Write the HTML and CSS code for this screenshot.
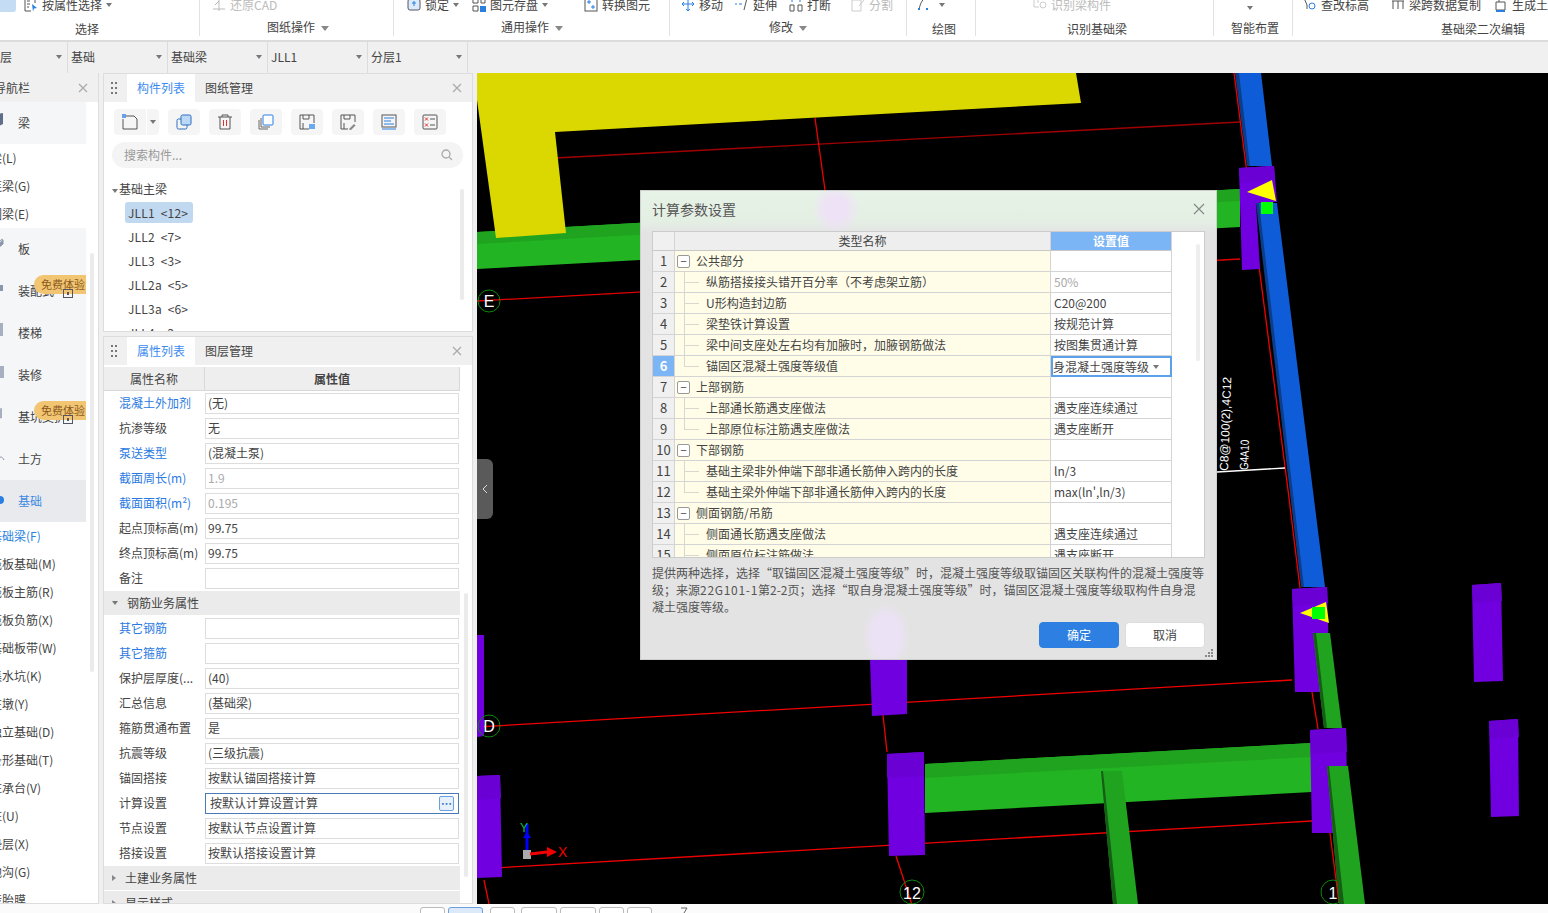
FILE: index.html
```html
<!DOCTYPE html>
<html lang="zh-CN">
<head>
<meta charset="utf-8">
<title>计算参数设置</title>
<link rel="stylesheet" href="styles.css">
</head>
<body>
<div class="app">
  <header class="ribbon">
    <section class="grp g1">
      <div class="tools"><span class="hot"></span><span class="tool"><svg class="ic" viewBox="0 0 14 14"><path d="M1 0v13h6M11 0v5M3 3h3M3 6h3M3 9h2" fill="none" stroke="#555"/><path d="M8 6l5 4-3 .5-1 3z" fill="#2a7fe0"/></svg>按属性选择<i class="dn"></i></span></div>
      <div class="lbl">选择</div>
    </section>
    <section class="grp g2">
      <div class="tools"><span class="tool off"><svg class="ic" viewBox="0 0 14 14"><path d="M1 11h12M7 0v13M3 7l4-4" fill="none" stroke="#bbb"/></svg>还原CAD</span></div>
      <div class="lbl up">图纸操作<i class="dn big"></i></div>
    </section>
    <section class="grp g3">
      <div class="tools"><span class="tool"><svg class="ic" viewBox="0 0 14 14"><rect x="1" y="1" width="12" height="11" rx="2" fill="#dcebfb" stroke="#556"/><path d="M7 3v5M5 5h4" stroke="#2a7fe0"/></svg>锁定<i class="dn"></i></span><span class="tool"><svg class="ic" viewBox="0 0 14 14"><path d="M1 0h5v5H1zM1 8h5v5H1zM9 0h4v5H9z" fill="none" stroke="#555"/><rect x="8" y="8" width="6" height="6" fill="#2a7fe0"/></svg>图元存盘<i class="dn"></i></span><span class="tool"><svg class="ic" viewBox="0 0 14 14"><rect x="1" y="0" width="12" height="13" fill="none" stroke="#555"/><path d="M4 3h2v2H4zM8 8h2v2H8z" fill="none" stroke="#2a7fe0"/></svg>转换图元</span></div>
      <div class="lbl up">通用操作<i class="dn big"></i></div>
    </section>
    <section class="grp g4">
      <div class="tools"><span class="tool"><svg class="ic" viewBox="0 0 14 14"><path d="M7 0v13M1 6h12M5 2l2-2 2 2M5 11l2 2 2-2M3 4L1 6l2 2M11 4l2 2-2 2" fill="none" stroke="#2a7fe0"/></svg>移动</span><span class="tool"><svg class="ic" viewBox="0 0 14 14"><path d="M0 6h2M4 6h3" stroke="#2a7fe0"/><path d="M9 12l3-12" stroke="#555"/></svg>延伸</span><span class="tool"><svg class="ic" viewBox="0 0 14 14"><path d="M1 7h4v6H1zM9 7h4v6H9z" fill="none" stroke="#555"/><path d="M3 0v4M11 0v4" stroke="#2a7fe0"/></svg>打断</span><span class="tool off"><svg class="ic" viewBox="0 0 14 14"><path d="M1 2h9v11H1zM8 8l5-6" fill="none" stroke="#ccc"/></svg>分割</span></div>
      <div class="lbl up">修改<i class="dn big"></i></div>
    </section>
    <section class="grp g5">
      <div class="tools"><span class="tool"><svg class="ic" viewBox="0 0 14 14"><path d="M2 12C3 6 5 2 8 0" fill="none" stroke="#555"/><rect x="1" y="10" width="2" height="2" fill="#2a7fe0"/><rect x="9" y="10" width="2" height="2" fill="#2a7fe0"/></svg><i class="dn"></i></span></div>
      <div class="lbl">绘图</div>
    </section>
    <section class="grp g6">
      <div class="tools"><span class="tool off"><svg class="ic" viewBox="0 0 14 14"><path d="M1 0v9h5M5 0v5" fill="none" stroke="#ccc"/><circle cx="10" cy="7" r="3" fill="none" stroke="#ccc"/></svg>识别梁构件</span></div>
      <div class="lbl">识别基础梁</div>
    </section>
    <section class="grp g7">
      <div class="tools"><span class="tool"><i class="dn"></i></span></div>
      <div class="lbl">智能布置</div>
    </section>
    <section class="grp g8">
      <div class="tools"><span class="tool"><svg class="ic" viewBox="0 0 14 14"><path d="M1 0l3 7v4" fill="none" stroke="#555"/><circle cx="9" cy="8" r="3" fill="none" stroke="#2a7fe0"/></svg>查改标高</span><span class="tool"><svg class="ic" viewBox="0 0 14 14"><path d="M1 3h12M2 3v8M7 3v8M12 3v8" fill="none" stroke="#555"/></svg>梁跨数据复制</span><span class="tool"><svg class="ic" viewBox="0 0 14 14"><path d="M2 4h9v8H2zM5 4V0" fill="none" stroke="#555"/><path d="M2 13h9" stroke="#2a7fe0" stroke-width="2"/></svg>生成土</span></div>
      <div class="lbl">基础梁二次编辑</div>
    </section>
  </header>

  <nav class="selbar">
    <div class="sel first">层<i class="dn"></i></div>
    <div class="sel">基础<i class="dn"></i></div>
    <div class="sel">基础梁<i class="dn"></i></div>
    <div class="sel">JLL1<i class="dn"></i></div>
    <div class="sel">分层1<i class="dn"></i></div>
  </nav>

  <main class="main">
    <aside class="nav">
      <div class="nav-head"><span class="nav-title">模块导航栏</span><svg class="x" viewBox="0 0 10 10"><path d="M1 1l8 8M9 1L1 9"/></svg></div>
      <div class="nav-body">
        <div class="cat"><svg class="cat-ic" viewBox="0 0 14 16"><path d="M1 3l12-2v11l-6 3z" fill="#5f6f8a"/></svg>梁</div>
        <div class="sub">梁(L)</div>
        <div class="sub">连梁(G)</div>
        <div class="sub">圈梁(E)</div>
        <div class="cat"><svg class="cat-ic" viewBox="0 0 14 16"><path d="M2 12L13 2v4L2 15zM2 7l11-6" fill="#8b97ab" stroke="#8b97ab"/></svg>板</div>
        <div class="cat"><svg class="cat-ic" viewBox="0 0 14 16"><path d="M1 5h12v6H1z" fill="#8b97ab"/></svg>装配式<span class="badge">免费体验</span><svg class="lock" viewBox="0 0 10 10"><rect x=".5" y="1.5" width="9" height="8" fill="none" stroke="#556"/><rect x="4" y="4" width="2" height="3" fill="#556"/></svg></div>
        <div class="cat"><svg class="cat-ic" viewBox="0 0 14 16"><path d="M1 14V9h4V5h4V1h4v13z" fill="#a7b0c0"/></svg>楼梯</div>
        <div class="cat"><svg class="cat-ic" viewBox="0 0 14 16"><path d="M6 2h8v12H6z" fill="#a7b0c0"/></svg>装修</div>
        <div class="cat"><svg class="cat-ic" viewBox="0 0 14 16"><path d="M2 5l10-3v10L2 15z" fill="#a7b0c0"/></svg>基坑支护<span class="badge">免费体验</span><svg class="lock" viewBox="0 0 10 10"><rect x=".5" y="1.5" width="9" height="8" fill="none" stroke="#556"/><rect x="4" y="4" width="2" height="3" fill="#556"/></svg></div>
        <div class="cat"><svg class="cat-ic" viewBox="0 0 14 16"><path d="M8 12c2-4 4-4 6 0" fill="none" stroke="#8b97ab"/></svg>土方</div>
        <div class="cat on"><svg class="cat-ic" viewBox="0 0 14 16"><circle cx="10" cy="10" r="4" fill="#2a7fe0"/></svg>基础</div>
        <div class="sub act">基础梁(F)</div>
        <div class="sub">筏板基础(M)</div>
        <div class="sub">筏板主筋(R)</div>
        <div class="sub">筏板负筋(X)</div>
        <div class="sub">基础板带(W)</div>
        <div class="sub">集水坑(K)</div>
        <div class="sub">柱墩(Y)</div>
        <div class="sub">独立基础(D)</div>
        <div class="sub">条形基础(T)</div>
        <div class="sub">桩承台(V)</div>
        <div class="sub">桩(U)</div>
        <div class="sub">垫层(X)</div>
        <div class="sub">地沟(G)</div>
        <div class="sub">砖胎膜</div>
      </div>
      <span class="sb sb-nav"></span>
    </aside>

    <div class="col">
      <section class="panel p1">
        <div class="p-head">
          <span class="grip"></span>
          <span class="tab on">构件列表</span>
          <span class="tab">图纸管理</span>
          <svg class="x" viewBox="0 0 10 10"><path d="M1 1l8 8M9 1L1 9"/></svg>
        </div>
        <div class="iconbar">
          <span class="btn split"><svg viewBox="0 0 16 16"><path d="M4 2h8l3 3v10H1V5" fill="none" stroke="#555"/><path d="M0 0h4v4H0z" fill="#6aa0e8"/></svg></span><span class="btn arrow"><i class="dn"></i></span>
          <span class="btn"><svg viewBox="0 0 16 16"><rect x="1" y="5" width="10" height="10" rx="1.5" fill="none" stroke="#2a6fc0"/><rect x="5" y="1" width="10" height="10" rx="1.5" fill="#bcd8f7" stroke="#2a6fc0"/></svg></span>
          <span class="btn"><svg viewBox="0 0 16 16"><path d="M1 3h14M5 3V1h6v2M3 3v12h10V3" fill="none" stroke="#555"/><path d="M6.500 6v6M9.500 6v6" stroke="#e03030"/></svg></span>
          <span class="btn"><svg viewBox="0 0 16 16"><path d="M1 6v9h9M3 4v9h9" fill="none" stroke="#666"/><rect x="5" y="1" width="10" height="10" rx="1" fill="#fff" stroke="#2a7fe0"/></svg></span>
          <span class="btn"><svg viewBox="0 0 16 16"><path d="M10 15H1V1h14v8M4 1v4h6V1M4 15V9" fill="none" stroke="#555"/><rect x="10" y="10" width="6" height="5" fill="#6aa9ee"/></svg></span>
          <span class="btn"><svg viewBox="0 0 16 16"><path d="M8 15H1V1h14v7M4 1v4h6V1M4 15V9" fill="none" stroke="#555"/><path d="M9 15l5-5 1.500 1.500-5 5z" fill="#888"/></svg></span>
          <span class="btn"><svg viewBox="0 0 16 16"><rect x="1" y="1" width="14" height="12" fill="none" stroke="#555"/><path d="M3 4h10M3 7h7M3 10h10M1 15h14" stroke="#2a7fe0"/></svg></span>
          <span class="btn"><svg viewBox="0 0 16 16"><rect x="1" y="1" width="14" height="14" rx="1" fill="none" stroke="#555"/><path d="M3 3.500l3 3M6 3.500l-3 3M3 9.500l3 3M6 9.500l-3 3" stroke="#e03030"/><path d="M8 5h5M8 11h5" stroke="#555"/></svg></span>
        </div>
        <div class="search"><span>搜索构件...</span><svg viewBox="0 0 12 12"><circle cx="5" cy="5" r="4" fill="none" stroke="#aaa" stroke-width="1.300"/><path d="M8 8l3 3" stroke="#aaa" stroke-width="1.300"/></svg></div>
        <div class="tree">
          <div class="t-root"><i class="dn"></i>基础主梁</div>
          <div class="t-item"><span class="pill">JLL1  &lt;12&gt;</span></div>
          <div class="t-item"><span>JLL2  &lt;7&gt;</span></div>
          <div class="t-item"><span>JLL3  &lt;3&gt;</span></div>
          <div class="t-item"><span>JLL2a  &lt;5&gt;</span></div>
          <div class="t-item"><span>JLL3a  &lt;6&gt;</span></div>
          <div class="t-item"><span>JLL4  &lt;2&gt;</span></div>
        </div>
        <span class="sb sb-p1"></span>
      </section>

      <section class="panel p2">
        <div class="p-head">
          <span class="grip"></span>
          <span class="tab on">属性列表</span>
          <span class="tab">图层管理</span>
          <svg class="x" viewBox="0 0 10 10"><path d="M1 1l8 8M9 1L1 9"/></svg>
        </div>
        <div class="props">
          <div class="ph"><span>属性名称</span><b>属性值</b></div>
          <div class="pr"><label class="lk">混凝土外加剂</label><span class="v">(无)</span></div>
          <div class="pr"><label>抗渗等级</label><span class="v">无</span></div>
          <div class="pr"><label class="lk">泵送类型</label><span class="v">(混凝土泵)</span></div>
          <div class="pr"><label class="lk">截面周长(m)</label><span class="v dim">1.9</span></div>
          <div class="pr"><label class="lk">截面面积(m²)</label><span class="v dim">0.195</span></div>
          <div class="pr"><label>起点顶标高(m)</label><span class="v">99.75</span></div>
          <div class="pr"><label>终点顶标高(m)</label><span class="v">99.75</span></div>
          <div class="pr"><label>备注</label><span class="v"></span></div>
          <div class="ps"><i class="dn"></i>钢筋业务属性</div>
          <div class="pr"><label class="lk">其它钢筋</label><span class="v"></span></div>
          <div class="pr"><label class="lk">其它箍筋</label><span class="v"></span></div>
          <div class="pr"><label>保护层厚度(...</label><span class="v">(40)</span></div>
          <div class="pr"><label>汇总信息</label><span class="v">(基础梁)</span></div>
          <div class="pr"><label>箍筋贯通布置</label><span class="v">是</span></div>
          <div class="pr"><label>抗震等级</label><span class="v">(三级抗震)</span></div>
          <div class="pr"><label>锚固搭接</label><span class="v">按默认锚固搭接计算</span></div>
          <div class="pr"><label>计算设置</label><span class="v focus"><em>按默认计算设置计算</em><u class="more">…</u></span></div>
          <div class="pr"><label>节点设置</label><span class="v">按默认节点设置计算</span></div>
          <div class="pr"><label>搭接设置</label><span class="v">按默认搭接设置计算</span></div>
          <div class="ps"><i class="rt"></i>土建业务属性</div>
          <div class="ps"><i class="rt"></i>显示样式</div>
        </div>
        <span class="sb sb-p2"></span>
      </section>
    </div>

    <div class="canvas">
      <svg class="scene" viewBox="477 73 1071 831" preserveAspectRatio="none">
        <g fill="none" stroke-width="1.300">
          <path d="M555 158L1240 122" stroke="#a00000"/>
          <path d="M815 118L825 190L883 715L887 752M896 856L912 905" stroke="#f00000"/>
          <path d="M477 301L1240 259" stroke="#e00000"/>
          <path d="M477 727L1292 680" stroke="#f00000"/>
          <path d="M477 869L1312 821" stroke="#f00000"/>
          <path d="M1234 73L1288 490L1300 588M1312 692L1318 729M1330 833L1339 903" stroke="#f00000"/>
          <path d="M484 880L489 904" stroke="#f00000"/>
        </g>
        <path d="M477 232L1240 189V227L477 269z" fill="#23b423"/>
        <path d="M477 232L1240 189V201L477 244z" fill="#20a420"/>
        <path d="M477 73H1076L1081 103L555 132L566 233L496 238L477 100z" fill="#dbd700"/>

        <path d="M1235 73H1240L1252 166H1247zM1256 203L1261 203L1305 587H1301z" fill="#0c3d8a"/>
        <path d="M1239 73H1261L1272 166H1250z" fill="#0f5cd8"/>
        <path d="M1239 168L1274 166L1277 202L1256 203L1260 269L1242 270z" fill="#7000e0"/>
        <path d="M1239 168L1274 166L1275 180L1240 183z" fill="#6a00d4"/>
        <path d="M1259 203H1277L1325 587H1304z" fill="#0f5cd8"/>
        <path d="M1247 192L1272 180L1276 201z" fill="#ffff00"/>
        <rect x="1261" y="202" width="12" height="12" fill="#00ff00"/>

        <path d="M870 660H907V714L872 716z" fill="#7000e0"/>
        <path d="M477 635H484V736L477 737z" fill="#7000e0"/>
        <path d="M477 776L500 775L502 877L477 878z" fill="#7000e0"/>
        <path d="M477 776L500 775L501 798L477 800z" fill="#6a00d4"/>

        <path d="M925 764L1312 743V792L925 813z" fill="#23b423"/>
        <path d="M925 764L1312 743V757L925 778z" fill="#20a420"/>
        <path d="M887 754L924 752L925 855L889 856z" fill="#7000e0"/>
        <path d="M887 754L924 752V776L887 778z" fill="#6a00d4"/>

        <path d="M1292 589L1327 587L1330 692L1295 692z" fill="#7000e0"/>
        <path d="M1292 589L1327 587L1328 603L1293 606z" fill="#6a00d4"/>
        <path d="M1313 633H1330L1342 728H1324z" fill="#20a420"/>
        <path d="M1313 633H1316L1327 728H1324z" fill="#155f15"/>
        <path d="M1310 730L1346 728L1348 833L1312 833z" fill="#7000e0"/>
        <path d="M1310 730L1346 728L1347 752L1311 754z" fill="#6a00d4"/>

        <path d="M1300 613L1326 602L1329 623z" fill="#ffff00"/>
        <rect x="1312" y="607" width="13" height="12" fill="#00ff00"/>

        <path d="M1472 585L1501 583L1503 681L1474 682z" fill="#7000e0"/>
        <path d="M1472 585L1501 583L1502 601L1473 603z" fill="#6a00d4"/>
        <path d="M1489 721L1518 719L1519 816L1491 817z" fill="#7000e0"/>
        <path d="M1489 721L1518 719L1519 737L1490 739z" fill="#6a00d4"/>

        <g fill="none" stroke="#0a8a0a">
          <circle cx="489" cy="301" r="11"/>
          <circle cx="489" cy="726" r="11"/>
          <circle cx="912" cy="892" r="12"/>
          <circle cx="1333" cy="892" r="12"/>
        </g>
        <g class="bubble">
          <text x="489" y="307" text-anchor="middle">E</text>
          <text x="489" y="732" text-anchor="middle">D</text>
          <text x="912" y="899" text-anchor="middle">12</text>
          <text x="1333" y="899" text-anchor="middle">1</text>
        </g>
        <path d="M1101 771H1122L1138 904H1113z" fill="#20a420"/>
        <path d="M1101 771H1103L1117 904H1113z" fill="#155f15"/>
        <path d="M1327 766H1348L1365 904H1339z" fill="#20a420"/>
        <path d="M1327 766H1329L1344 904H1339z" fill="#155f15"/>
        <path d="M1217 472L1285 468" stroke="#fff" stroke-width="1.300"/>
        <g class="cad">
          <text transform="translate(1228 471) rotate(-88)" textLength="94" lengthAdjust="spacingAndGlyphs">C8@100(2),4C12</text>
          <text transform="translate(1248 470) rotate(-88)" textLength="30" lengthAdjust="spacingAndGlyphs">G4A10</text>
        </g>
        <path d="M527 824V852" stroke="#0000ff" stroke-width="3"/>
        <path d="M527 832l-4 6h8z" fill="#0000ff"/>
        <rect x="523" y="850" width="8" height="9" fill="#aaa"/>
        <path d="M530 854L547 852" stroke="#f00000" stroke-width="3"/>
        <path d="M547 847L557 852L547 857z" fill="#f00000"/>
        <text class="ax-x" x="558" y="857">X</text>
        <text class="ax-y" x="520" y="832">Y</text>
      </svg>
      <span class="handle"><svg viewBox="0 0 6 10"><path d="M5 1L1 5l4 4" fill="none" stroke="#ddd"/></svg></span>

      <div class="dialog">
        <div class="d-head"><span>计算参数设置</span><svg class="dx" viewBox="0 0 12 12"><path d="M1 1l10 10M11 1L1 11"/></svg></div>
        <div class="grid">
          <div class="r rh"><span class="n"></span><span class="c">类型名称</span><span class="val">设置值</span></div>
          <div class="r"><span class="n">1</span><span class="c"><i class="box">−</i>公共部分</span><span class="val"></span></div>
          <div class="r"><span class="n">2</span><span class="c kid"><i class="br"></i>纵筋搭接接头错开百分率（不考虑架立筋）</span><span class="val dim">50%</span></div>
          <div class="r"><span class="n">3</span><span class="c kid"><i class="br"></i>U形构造封边筋</span><span class="val">C20@200</span></div>
          <div class="r"><span class="n">4</span><span class="c kid"><i class="br"></i>梁垫铁计算设置</span><span class="val">按规范计算</span></div>
          <div class="r"><span class="n">5</span><span class="c kid"><i class="br"></i>梁中间支座处左右均有加腋时，加腋钢筋做法</span><span class="val">按图集贯通计算</span></div>
          <div class="r cur"><span class="n">6</span><span class="c kid"><i class="br end"></i>锚固区混凝土强度等级值</span><span class="val edit">身混凝土强度等级<i class="dn"></i></span></div>
          <div class="r"><span class="n">7</span><span class="c"><i class="box">−</i>上部钢筋</span><span class="val"></span></div>
          <div class="r"><span class="n">8</span><span class="c kid"><i class="br"></i>上部通长筋遇支座做法</span><span class="val">遇支座连续通过</span></div>
          <div class="r"><span class="n">9</span><span class="c kid"><i class="br end"></i>上部原位标注筋遇支座做法</span><span class="val">遇支座断开</span></div>
          <div class="r"><span class="n">10</span><span class="c"><i class="box">−</i>下部钢筋</span><span class="val"></span></div>
          <div class="r"><span class="n">11</span><span class="c kid"><i class="br"></i>基础主梁非外伸端下部非通长筋伸入跨内的长度</span><span class="val">ln/3</span></div>
          <div class="r"><span class="n">12</span><span class="c kid"><i class="br end"></i>基础主梁外伸端下部非通长筋伸入跨内的长度</span><span class="val">max(ln',ln/3)</span></div>
          <div class="r"><span class="n">13</span><span class="c"><i class="box">−</i>侧面钢筋/吊筋</span><span class="val"></span></div>
          <div class="r"><span class="n">14</span><span class="c kid"><i class="br"></i>侧面通长筋遇支座做法</span><span class="val">遇支座连续通过</span></div>
          <div class="r"><span class="n">15</span><span class="c kid"><i class="br"></i>侧面原位标注筋做法</span><span class="val">遇支座断开</span></div>
          <span class="sb sb-d"></span>
        </div>
        <p class="desc">提供两种选择，选择“取锚固区混凝土强度等级”时，混凝土强度等级取锚固区关联构件的混凝土强度等级；来源<span class="nums">22G101-1</span>第2-2页；选择“取自身混凝土强度等级”时，锚固区混凝土强度等级取构件自身混凝土强度等级。</p>
        <div class="d-foot"><span class="b ok">确定</span><span class="b">取消</span></div>
        <svg class="resize" viewBox="0 0 8 8"><path d="M6 0h2v2H6zM3 3h2v2H3zM6 3h2v2H6zM0 6h2v2H0zM3 6h2v2H3zM6 6h2v2H6z" fill="#888"/></svg>
      </div>
    </div>
  </main>

  <footer class="status">
    <span class="s w25"></span><span class="s w36 cur"></span><span class="s w25 tight"></span><span class="s w36"></span><span class="s w36"></span><span class="s w25"></span><span class="s w25"></span><svg class="st-ic" viewBox="0 0 8 6"><path d="M1 1h6L4 6" fill="none" stroke="#666"/></svg>
  </footer>
</div>
</body>
</html>
```

FILE: styles.css
```css
* { box-sizing: border-box; }
html, body { margin: 0; height: 100%; overflow: hidden; }
body { font: 12px/16px "Noto Sans CJK SC", "Noto Sans", sans-serif; color: #444; background: #f0f0f0; }
.app { width: 1548px; height: 913px; display: flex; flex-direction: column; overflow: hidden; }
i, u, em { font-style: normal; text-decoration: none; }

/* small triangles */
.dn { display: inline-block; width: 0; height: 0; border: 3px solid transparent; border-top: 4px solid #777; border-bottom: 0; vertical-align: middle; }
.dn.big { border-width: 5px 4px 0; margin-left: 6px; border-top-color: #888; }
.rt { display: inline-block; width: 0; height: 0; border: 3px solid transparent; border-left: 4px solid #888; border-right: 0; }

/* ribbon */
.ribbon { height: 42px; flex: none; display: flex; background: #fff; border-bottom: 2px solid #dcdcdc; overflow: hidden; }
.grp { position: relative; display: flex; flex-direction: column; height: 36px; border-right: 1px solid #e2e2e2; }
.tools { display: grid; height: 12px; margin-top: -2px; white-space: nowrap; align-items: center; }
.tool { display: flex; align-items: center; line-height: 14px; }
.tool .dn { margin-left: 4px; }
.ic { width: 14px; height: 14px; margin-right: 4px; flex: none; }
.off { color: #bbb; }
.lbl { line-height: 16px; margin-top: 11px; }
.lbl.up { margin-top: 9px; }
.hot { width: 16px; height: 16px; background: #c5dcf5; border-radius: 0 0 3px 0; margin-top: -2px; }
.g1 { width: 200px; } .g1 .tools { grid-template-columns: 24px auto; justify-content: start; } .g1 .lbl { padding-left: 75px; }
.g2 { width: 194px; } .g2 .tools { padding-left: 12px; } .g2 .lbl { padding-left: 67px; }
.g3 { width: 276px; } .g3 .tools { padding-left: 13px; grid-template-columns: 65px 112px auto; } .g3 .lbl { padding-left: 107px; }
.g4 { width: 237px; } .g4 .tools { padding-left: 11px; grid-template-columns: 54px 54px 62px auto; } .g4 .lbl { padding-left: 99px; }
.g5 { width: 69px; } .g5 .tools { padding-left: 10px; } .g5 .lbl { padding-left: 25px; }
.g6 { width: 238px; } .g6 .tools { padding-left: 57px; } .g6 .lbl { padding-left: 91px; }
.g7 { width: 79px; } .g7 .tools { padding-left: 29px; height: 20px; } .g7 .lbl { padding-left: 17px; margin-top: 3px; }
.g8 { flex: 1; border-right: 0; } .g8 .tools { padding-left: 10px; grid-template-columns: 88px 103px auto; } .g8 .lbl { padding-left: 148px; }

/* selector bar */
.selbar { height: 31px; flex: none; display: flex; background: #f0f0f0; }
.sel { width: 100px; display: flex; align-items: center; justify-content: space-between; padding: 0 5px 1px 3px; border-right: 1px solid #dcdcdc; color: #444; line-height: 16px; }
.sel.first { width: 68px; padding-left: 0; }

/* main */
.main { flex: 1; display: flex; gap: 4px; min-height: 0; }
.x { width: 10px; height: 10px; flex: none; }
.x path { fill: none; stroke: #aaa; stroke-width: 1.200; }

.nav { position: relative; width: 99px; flex: none; background: #fff; border-right: 1px solid #ddd; border-bottom: 1px solid #ddd; overflow: hidden; }
.nav-head { height: 29px; background: #f0f0f0; display: flex; align-items: center; justify-content: space-between; padding-right: 10px; }
.nav-title { margin-left: -30px; }
.nav-body { width: 86px; }
.cat { position: relative; height: 42px; display: flex; align-items: center; background: #f5f6f8; white-space: nowrap; }
.cat.on { background: #e8eaee; color: #3f8be0; }
.cat-ic { width: 14px; height: 16px; margin: -6px 14px 0 -10px; flex: none; overflow: visible; }
.sub { height: 28px; line-height: 28px; margin-left: -10px; white-space: nowrap; }
.sub.act { color: #2a7fe0; }
.badge { position: absolute; left: 34px; top: 5px; width: 52px; height: 19px; line-height: 19px; padding-left: 7px; border-radius: 10px 0 0 10px; background: #f2c572; color: #8a5a20; font-size: 11px; overflow: hidden; }
.lock { position: absolute; left: 63px; top: 18px; width: 10px; height: 10px; }
.sb { position: absolute; background: #ebebeb; border-radius: 2px; width: 4px; }
.sb-nav { left: 90px; top: 180px; height: 419px; }

.col { width: 370px; flex: none; display: flex; flex-direction: column; gap: 4px; }
.panel { position: relative; background: #fff; border: 1px solid #ddd; overflow: hidden; }
.p1 { height: 259px; flex: none; }
.p2 { flex: 1; min-height: 0; }
.p-head { height: 28px; display: flex; align-items: stretch; background: #f0f0f0; padding-left: 23px; }
.grip { position: relative; width: 0; }
.grip::before { content: ""; position: absolute; left: -16px; top: 8px; width: 6px; height: 14px; background: radial-gradient(circle at 1px 1px, #777 1px, transparent 1.400px) 0 0 / 4px 5px; }
.tab { width: 68px; text-align: center; line-height: 28px; }
.tab.on { background: #fff; color: #3d8bef; }
.tab + .tab { margin-left: 10px; width: 48px; }
.p-head .x { margin: 9px 10px 0 auto; }

.iconbar { display: flex; gap: 9px; padding: 7px 0 0 10px; height: 40px; }
.btn { width: 32px; height: 26px; background: #f5f5f5; border-radius: 4px; display: flex; align-items: center; justify-content: center; }
.btn svg { width: 16px; height: 16px; }
.btn.split { border-radius: 4px 0 0 4px; width: 32px; }
.btn.arrow { width: 12px; margin-left: -8px; border-radius: 0 4px 4px 0; }
.search { margin: 0 9px 0 8px; height: 26px; border-radius: 13px; background: #f4f4f4; display: flex; align-items: center; justify-content: space-between; padding: 0 10px 0 12px; color: #999; }
.search svg { width: 12px; height: 12px; }
.tree { padding-top: 13px; }
.t-root { height: 16px; line-height: 16px; padding-left: 8px; margin-bottom: 3px; }
.t-root .dn { margin-right: 1px; }
.t-item { height: 24px; padding-left: 21px; display: flex; align-items: center; white-space: pre; letter-spacing: .2px; }
.t-item span { padding: 0 3px; line-height: 21px; }
.t-item .pill { background: #c0d8f0; border-radius: 3px; padding-right: 5px; }
.sb-p1 { left: 356px; top: 115px; height: 111px; }

.props { width: 356px; }
.ph { height: 24px; margin-top: 2px; display: grid; grid-template-columns: 100px 1fr; background: #eee; border-bottom: 1px solid #d8d8d8; text-align: center; line-height: 23px; }
.ph b { border-left: 1px solid #d8d8d8; border-right: 1px solid #d8d8d8; font-weight: 700; }
.pr { height: 25px; display: grid; grid-template-columns: 101px 254px; padding-top: 2px; }
.pr label { padding-left: 15px; line-height: 19px; white-space: nowrap; }
.lk { color: #2a7ae2; }
.v { height: 21px; border: 1px solid #ddd; padding-left: 2px; line-height: 17px; white-space: nowrap; }
.dim { color: #aaa; }
.v.focus { border-color: #4a7ab5; display: flex; justify-content: space-between; padding: 0 4px 0 4px; }
.more { width: 15px; height: 15px; margin-top: 2px; border: 1px solid #6aa0e0; border-radius: 2px; background: #e8f1fb; color: #2a6fc0; font-weight: 700; font-size: 11px; line-height: 12px; text-align: center; overflow: hidden; }
.ps { height: 24px; margin-bottom: 1px; background: #ebebeb; line-height: 24px; padding-left: 8px; display: flex; align-items: center; }
.ps i { margin-right: 9px; }
.sb-p2 { left: 360px; top: 256px; height: 284px; }

/* canvas */
.canvas { position: relative; flex: 1; background: #000; height: 831px; overflow: hidden; }
.scene { display: block; width: 100%; height: 100%; }
.bubble text { fill: #fff; font: 16px "Liberation Sans", sans-serif; }
.cad text { fill: #fff; font: 12px "Liberation Sans", sans-serif; }
.ax-x { fill: #f00000; font: 14px "Liberation Sans", sans-serif; }
.ax-y { fill: #0ac040; font: 12px "Liberation Sans", sans-serif; }
.handle { position: absolute; left: 0; top: 386px; width: 16px; height: 60px; background: #5a5a5a; border-radius: 0 6px 6px 0; display: flex; align-items: center; justify-content: center; }
.handle svg { width: 6px; height: 10px; }

/* dialog */
.dialog {
  position: absolute; left: 163px; top: 117px; width: 577px; height: 470px;
  border: 1px solid #cfcfcf;
  background:
    radial-gradient(ellipse 24px 34px at 245px 445px, #ece2f6 55%, rgba(236,226,246,0) 100%),
    radial-gradient(ellipse 24px 26px at 195px 18px, #eee2f6 45%, rgba(238,226,246,0) 100%),
    linear-gradient(#e8f3e8 0, #e4efe4 30px, #e3e3e3 42px);
  padding: 0 11px;
}
.d-head { height: 40px; display: flex; align-items: center; justify-content: space-between; font-size: 14px; color: #555; padding-bottom: 5px; }
.dx { width: 12px; height: 12px; }
.dx path { fill: none; stroke: #888; stroke-width: 1.200; }
.grid { position: relative; width: 553px; height: 327px; background: #fff; border: 1px solid #ccc; overflow: hidden; }
.r { display: grid; grid-template-columns: 22px 376px 121px; height: 21px; }
.r > span { border-right: 1px solid #d4d4d4; border-bottom: 1px solid #d4d4d4; line-height: 20px; white-space: nowrap; }
.rh { height: 19px; }
.rh > span { line-height: 18px; border-bottom-color: #c8c8c8; }
.n { background: #f0f0f0; text-align: center; font-size: 13px; }
.c { background: #fffde8; display: flex; align-items: center; }
.rh .c { background: #eee; justify-content: center; }
.val { padding-left: 3px; }
.rh .val { background: #7cb5f5; color: #fff; text-align: center; font-weight: 700; padding: 0; }
.cur .n { background: #7cb5f5; color: #fff; font-weight: 700; }
.box { width: 13px; height: 13px; margin: 0 6px 0 2px; flex: none; border: 1px solid #999; border-radius: 2px; background: #fff; line-height: 10px; text-align: center; font-size: 11px; }
.br { width: 15px; height: 20px; margin: 0 7px 0 9px; flex: none; background: linear-gradient(#d8d8d0, #d8d8d0) 0 0 / 1px 100% no-repeat, linear-gradient(#d8d8d0, #d8d8d0) 0 50% / 15px 1px no-repeat; }
.br.end { background: linear-gradient(#d8d8d0, #d8d8d0) 0 0 / 1px 50% no-repeat, linear-gradient(#d8d8d0, #d8d8d0) 0 50% / 15px 1px no-repeat; }
.val.edit { border: 2px solid #5aa0ea; padding: 0 11px 0 0; line-height: 17px; display: flex; align-items: center; justify-content: space-between; overflow: hidden; }
.sb-d { left: 543px; top: 12px; height: 117px; background: #eee; }
.desc { margin: 6px 0 0; width: 553px; line-height: 17px; color: #555; }
.nums { letter-spacing: .7px; }
.d-foot { display: flex; justify-content: flex-end; gap: 6px; margin-top: 7px; }
.b { width: 80px; height: 26px; border-radius: 4px; background: #fff; border: 1px solid #ddd; text-align: center; line-height: 24px; color: #444; }
.b.ok { background: #2d80e2; border-color: #2d80e2; color: #fff; }
.resize { position: absolute; right: 3px; bottom: 2px; width: 8px; height: 8px; }

/* bottom */
.status { height: 9px; flex: none; background: #fbfbfb; display: flex; gap: 3px; padding: 3px 0 0 420px; overflow: hidden; }
.s { height: 14px; border: 1px solid #bbb; border-radius: 3px; background: #fff; }
.w25 { width: 25px; }
.w36 { width: 36px; }
.s.cur { width: 35px; border-color: #6aa0e0; background: #dbe9f9; }
.tight { margin: 0 3px 0 4px; }
.st-ic { width: 8px; height: 6px; margin-left: 25px; }
```
